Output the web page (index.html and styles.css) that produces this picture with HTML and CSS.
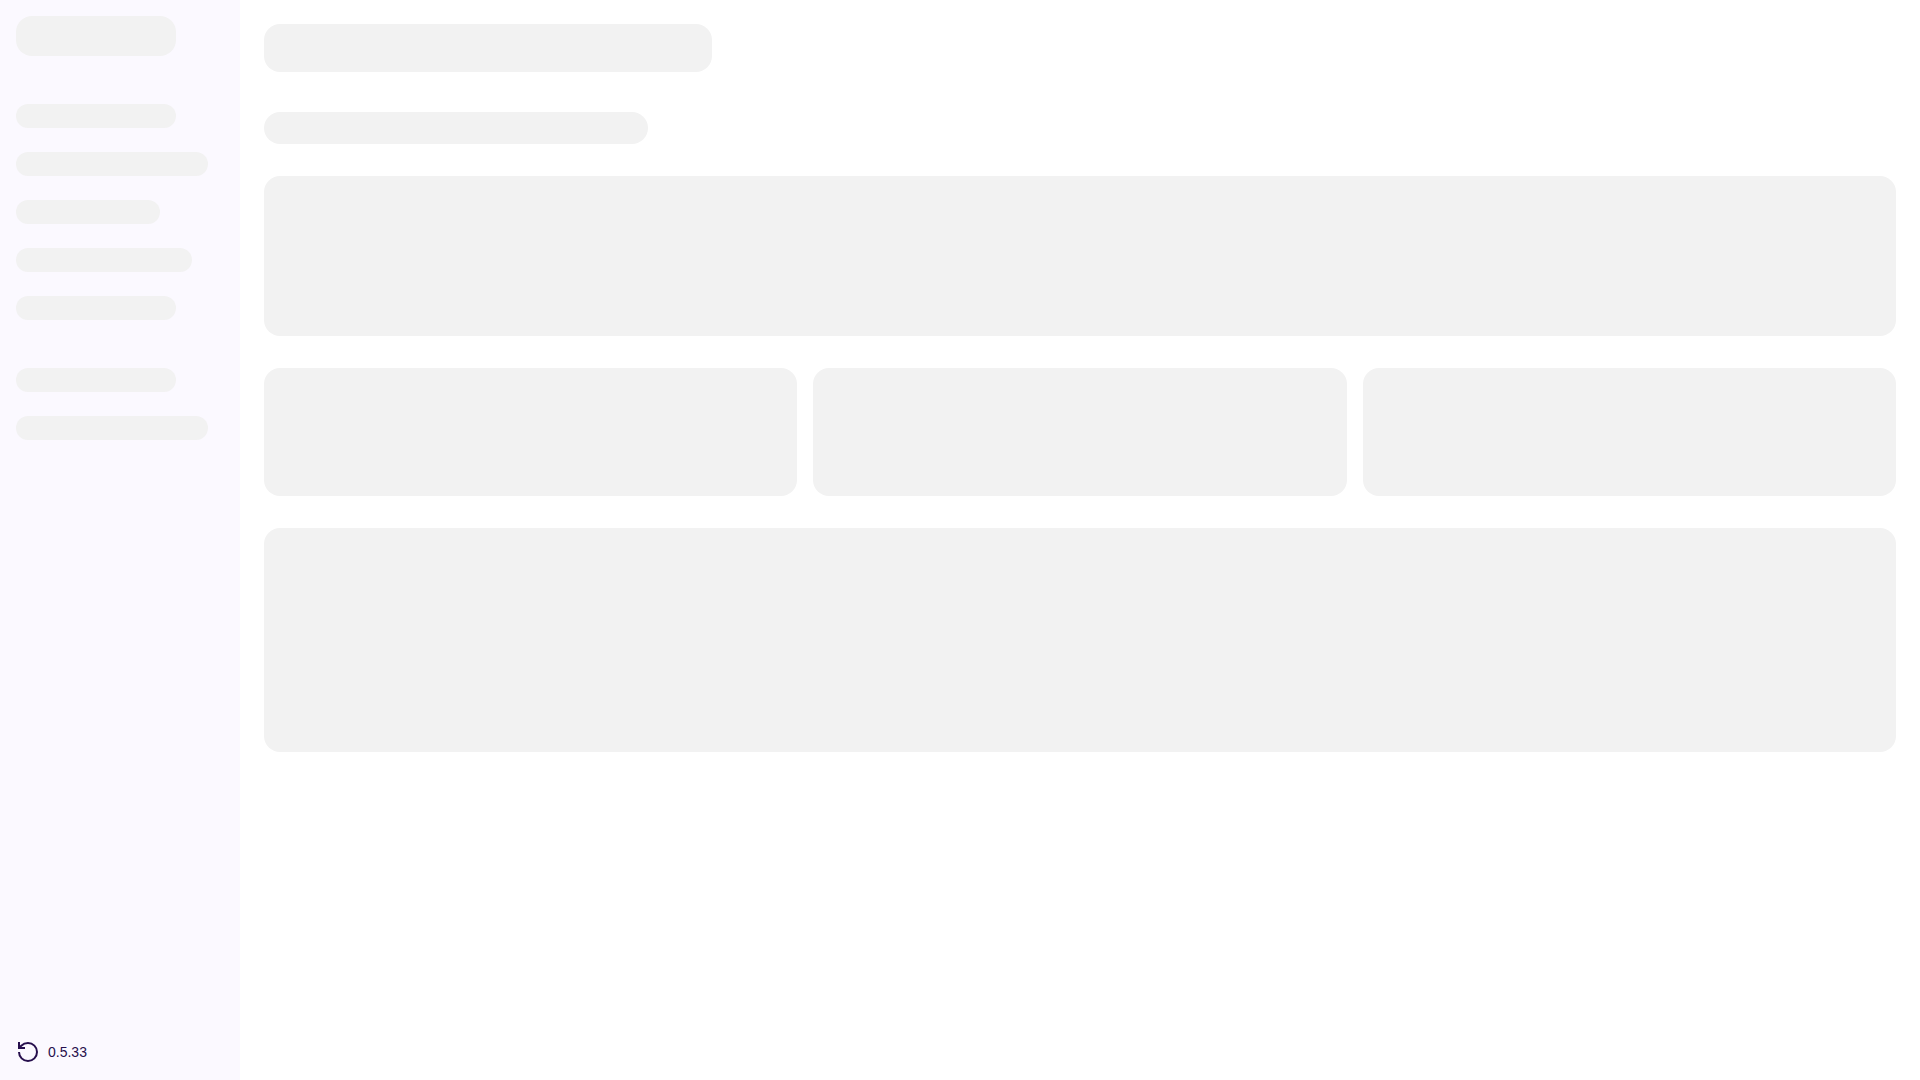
FILE: index.html
```
<!DOCTYPE html>
<html lang="en">
<head>
    <meta charset="UTF-8">
    <meta name="viewport" content="width=device-width, initial-scale=1.0">
    <title>Loading</title>
    <link rel="stylesheet" href="styles.css">
</head>
<body>
    <div class="layout">
        <aside class="sidebar">
            <div class="skeleton logo"></div>
            <div class="menu">
                <div class="skeleton item w-160"></div>
                <div class="skeleton item w-192"></div>
                <div class="skeleton item w-144"></div>
                <div class="skeleton item w-176"></div>
                <div class="skeleton item w-160"></div>
            </div>
            <div class="menu">
                <div class="skeleton item w-160"></div>
                <div class="skeleton item w-192"></div>
            </div>
            <div class="version">
                <svg width="24" height="24" viewBox="0 0 24 24" fill="none" stroke="currentColor" stroke-width="2" aria-hidden="true">
                    <path d="M3 12a9 9 0 1 0 9-9 9.75 9.75 0 0 0-6.74 2.74L3 8"/>
                    <path d="M3 2v6h6"/>
                </svg>
                <span>0.5.33</span>
            </div>
        </aside>
        <main class="content" aria-busy="true">
            <div class="skeleton title"></div>
            <div class="skeleton subtitle"></div>
            <div class="skeleton banner"></div>
            <div class="cards">
                <div class="skeleton card"></div>
                <div class="skeleton card"></div>
                <div class="skeleton card"></div>
            </div>
            <div class="skeleton panel"></div>
        </main>
    </div>
</body>
</html>
```
FILE: styles.css
```
* {
    box-sizing: border-box;
}
body {
    margin: 0;
    font-family: "Liberation Sans", Arial, sans-serif;
    color: #260f4d;
    background-color: #fff;
}
.layout {
    display: flex;
    min-height: 100vh;
}
.skeleton {
    background-color: #f2f2f2;
    border-radius: 16px;
}

/* Sidebar */
.sidebar {
    display: flex;
    flex-direction: column;
    flex-shrink: 0;
    width: 240px;
    padding: 16px;
    background-color: #fbf9ff;
}
.logo {
    width: 160px;
    height: 40px;
}
.menu {
    display: flex;
    flex-direction: column;
    gap: 24px;
    margin-top: 48px;
}
.item {
    height: 24px;
}
.w-144 {
    width: 144px;
}
.w-160 {
    width: 160px;
}
.w-176 {
    width: 176px;
}
.w-192 {
    width: 192px;
}
.version {
    display: flex;
    align-items: center;
    gap: 8px;
    margin-top: auto;
    font-size: 14px;
    line-height: 24px;
}

/* Main content */
.content {
    display: flex;
    flex-direction: column;
    flex: 1;
    gap: 32px;
    padding: 24px;
}
.title {
    width: 448px;
    height: 48px;
    margin-bottom: 8px;
}
.subtitle {
    width: 384px;
    height: 32px;
}
.banner {
    height: 160px;
}
.cards {
    display: grid;
    grid-template-columns: repeat(3, 1fr);
    gap: 16px;
}
.card {
    height: 128px;
}
.panel {
    height: 224px;
}
```
